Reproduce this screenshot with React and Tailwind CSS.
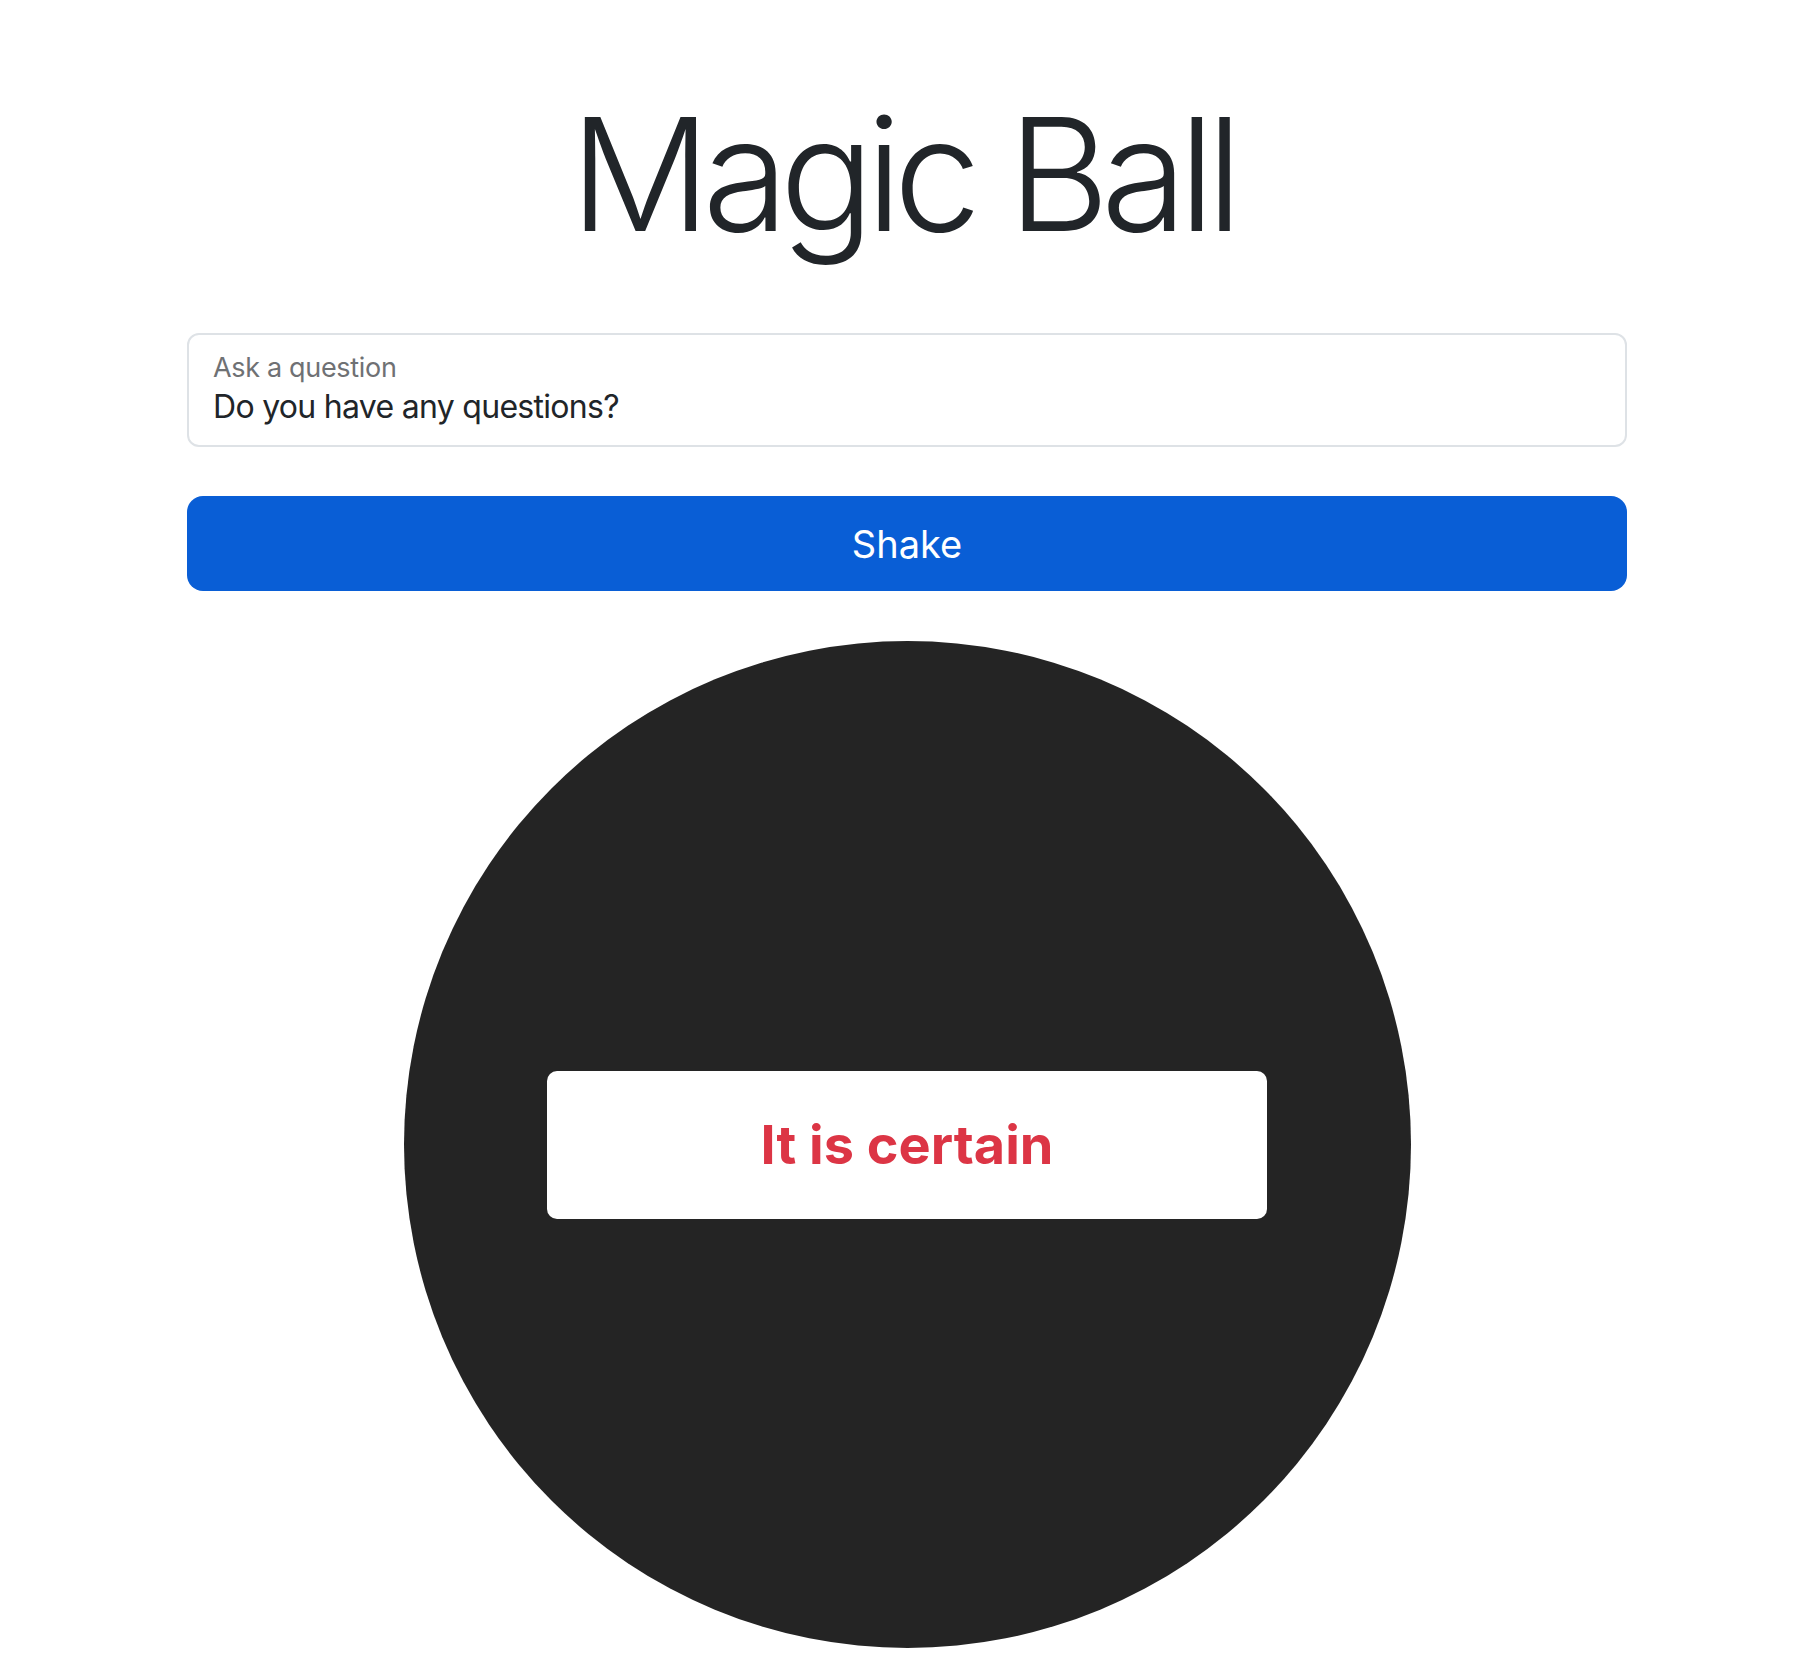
import React from "react";

export default function App() {
  return (
    <div className="min-h-[1654px] bg-white font-['Inter',_'Liberation_Sans',_sans-serif] text-[#212529]">
      <div className="mx-auto w-[1440px] pt-[96px] pb-[6px]">
        <h1 className="pr-[10px] text-center text-[157px] font-light leading-none tracking-[-0.056em]">Magic Ball</h1>

        <div className="mt-[80px] h-[114px] rounded-[12px] border-2 border-[#dee2e6] px-[24px] pt-[19px]">
          <div className="text-[27px] leading-none tracking-[-0.012em] text-[#6f7174]">Ask a question</div>
          <div className="mt-[10px] text-[32px] leading-none tracking-[-0.022em]">Do you have any questions?</div>
        </div>

        <button className="mt-[49px] flex h-[95px] w-full items-center justify-center rounded-[16px] bg-[#095ed6] text-[38px] leading-none text-white">
          Shake
        </button>

        <div className="mx-auto mt-[50px] flex h-[1007px] w-[1007px] items-center justify-center rounded-full bg-[#242424]">
          <div className="flex h-[148px] w-[720px] items-center justify-center rounded-[10px] bg-white">
            <span className="text-[54px] font-bold leading-none text-[#dc3545]">It is certain</span>
          </div>
        </div>
      </div>
    </div>
  );
}
